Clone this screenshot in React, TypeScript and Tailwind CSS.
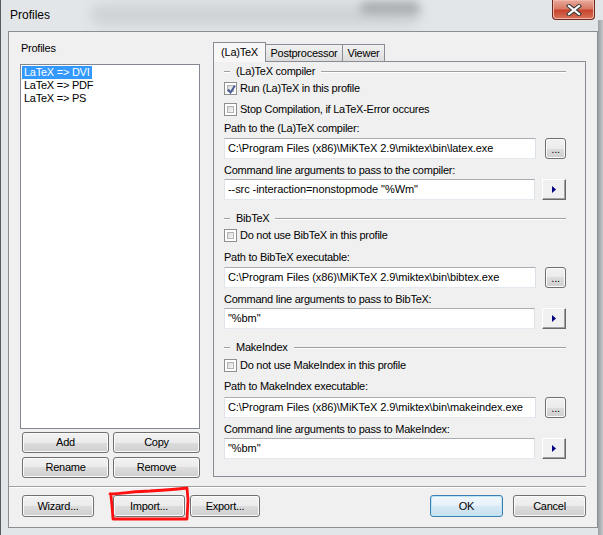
import React from "react";

// Win7 "Profiles" dialog

const font = "font-['Tahoma','Liberation_Sans',sans-serif] tracking-[-0.25px]";

function Win7Button({
  label,
  className = "",
  isDefault = false,
}: {
  label: string;
  className?: string;
  isDefault?: boolean;
}) {
  return (
    <div
      className={`flex items-center justify-center rounded-[3px] border text-[11px] leading-none text-black ${
        isDefault
          ? "border-[#3c7fb1] bg-[linear-gradient(#f0f7fc_0%,#e6f1f9_50%,#d6e8f4_50%,#c9e0f0_100%)] shadow-[inset_0_0_0_1px_#bde4f7]"
          : "border-[#707070] bg-[linear-gradient(#f2f2f2_0%,#ebebeb_50%,#dddddd_50%,#cfcfcf_100%)] shadow-[inset_0_0_0_1px_#fbfbfb]"
      } ${className}`}
    >
      {label}
    </div>
  );
}

function Checkbox({ checked = false, label }: { checked?: boolean; label: string }) {
  return (
    <div className="flex h-[13px] items-center">
      <div className="relative h-[13px] w-[13px] border border-[#8e8f8f] bg-white p-[2px]">
        <div className="h-full w-full border border-[#b4b4b4] bg-[linear-gradient(135deg,#d8d8d8,#f8f8f8)]" />
        {checked && (
          <svg className="absolute left-[1px] top-[1px]" width="11" height="11" viewBox="0 0 11 11">
            <path d="M2 5.5 L4.5 8.5 L9 1.5" fill="none" stroke="#4a5f97" strokeWidth="2" />
          </svg>
        )}
      </div>
      <span className="ml-[3px] text-[11px] leading-[13px]">{label}</span>
    </div>
  );
}

function GroupHeader({ label }: { label: string }) {
  return (
    <div className="flex h-[13px] items-center">
      <div className="w-[6px] border-t border-b border-t-[#a0a0a0] border-b-white" />
      <span className="ml-[6px] text-[11px] leading-[13px]">{label}</span>
      <div className="ml-[6px] flex-1 border-t border-b border-t-[#a0a0a0] border-b-white" />
    </div>
  );
}

function Label({ text, className = "" }: { text: string; className?: string }) {
  return <div className={`h-[13px] text-[11px] leading-[13px] ${className}`}>{text}</div>;
}

function Field({ value, className = "", button }: { value: string; className?: string; button: "browse" | "arrow" }) {
  return (
    <div className={`flex h-[21px] items-center ${className}`}>
      <div className="flex h-[21px] w-[314px] items-center border border-t-[#abadb3] border-l-[#e2e3ea] border-r-[#dbdfe6] border-b-[#e3e9ef] bg-white pl-[3px] text-[11px] tracking-[-0.08px]">
        {value}
      </div>
      {button === "browse" ? (
        <Win7Button label="..." className="ml-[9px] h-[21px] w-[21px] items-end pb-[3px]" />
      ) : (
        <div className="ml-[7px] flex h-[21px] w-[24px] items-center justify-center border border-t-white border-l-white border-r-[#696969] border-b-[#696969] bg-[#f0f0f0] shadow-[inset_-1px_-1px_0_#a0a0a0]">
          <svg width="4" height="7" viewBox="0 0 4 7">
            <path d="M0 0 L4 3.5 L0 7 Z" fill="#000080" />
          </svg>
        </div>
      )}
    </div>
  );
}

export default function App() {
  return (
    <div className={`relative h-[535px] w-[603px] overflow-hidden bg-[#e3e6e9] text-black ${font}`}>
      {/* blurred glass behind title */}
      <div className="absolute left-[90px] top-[4px] h-[22px] w-[330px] rounded-full bg-[#d0d3d6] blur-[6px]" />
      <div className="absolute left-[360px] top-[2px] h-[12px] w-[60px] rounded-full bg-[#a8acb0] blur-[5px]" />
      <div className="absolute left-[0px] top-[0px] h-[535px] w-[1px] bg-[#5a5a5a]" />
      <div className="absolute right-0 top-[20px] h-[515px] w-[5px] bg-[linear-gradient(90deg,#9a9ea2,#c4c7ca)]" />

      {/* title bar */}
      <div className="relative flex h-[31px] items-start">
        <span className="ml-[10px] mt-[8px] font-['Liberation_Sans',sans-serif] text-[12px] leading-[15px] tracking-normal">
          Profiles
        </span>
        <div className="ml-auto mr-[8px] flex h-[20px] w-[43px] items-center justify-center rounded-b-[4px] border border-t-0 border-[#6e2a20] bg-[linear-gradient(#e9a99b_0%,#d87a66_45%,#c8442d_55%,#d9735a_100%)] shadow-[inset_0_0_0_1px_#f1b7aa]">
          <svg width="16" height="12" viewBox="0 0 16 12">
            <path d="M3 2 L13 10 M13 2 L3 10" stroke="#3a3a3a" strokeWidth="4.2" strokeLinecap="square" />
            <path d="M3 2 L13 10 M13 2 L3 10" stroke="#ffffff" strokeWidth="2.2" strokeLinecap="square" />
          </svg>
        </div>
      </div>

      {/* client area */}
      <div className="relative ml-[8px] h-[497px] w-[590px] border border-[#8b8f94] bg-[#f0f0f0]">
        <div className="flex">
          {/* left column */}
          <div className="ml-[11px] mt-[10px] w-[180px]">
            <Label text="Profiles" className="ml-[1px]" />
            <div className="mt-[9px] h-[365px] w-[180px] border border-[#828790] bg-white pl-[1px] pt-[1px]">
              <div className="h-[13px] w-fit bg-[#3399ff] px-[2px] text-[11px] leading-[13px] text-white">
                LaTeX =&gt; DVI
              </div>
              <div className="h-[13px] px-[2px] text-[11px] leading-[13px]">LaTeX =&gt; PDF</div>
              <div className="h-[13px] px-[2px] text-[11px] leading-[13px]">LaTeX =&gt; PS</div>
            </div>
            <div className="mt-[3px] flex gap-[4px] pl-[2px]">
              <Win7Button label="Add" className="h-[21px] w-[87px]" />
              <Win7Button label="Copy" className="h-[21px] w-[87px]" />
            </div>
            <div className="mt-[4px] flex gap-[4px] pl-[2px]">
              <Win7Button label="Rename" className="h-[21px] w-[87px]" />
              <Win7Button label="Remove" className="h-[21px] w-[87px]" />
            </div>
          </div>

          {/* right column: tabs */}
          <div className="ml-[13px] mt-[10px] w-[373px]">
            <div className="relative z-10 flex h-[20px] items-end">
              <div className="flex h-[20px] w-[53px] items-start justify-center border border-b-0 border-[#898c95] bg-[#f7f7f7] pt-[3px] text-[11px] leading-[13px]">
                (La)TeX
              </div>
              <div className="mb-[1px] flex h-[17px] w-[77px] items-center justify-center border border-b-0 border-l-0 border-[#898c95] bg-[linear-gradient(#f2f2f2,#dcdcdc)] text-[11px]">
                Postprocessor
              </div>
              <div className="mb-[1px] flex h-[17px] w-[42px] items-center justify-center border border-b-0 border-l-0 border-[#898c95] bg-[linear-gradient(#f2f2f2,#dcdcdc)] text-[11px]">
                Viewer
              </div>
            </div>
            <div className="-mt-[1px] h-[416px] border border-[#898c95] bg-[#f0f0f0] pl-[10px] pr-[19px] pt-[3px]">
              <GroupHeader label="(La)TeX compiler" />
              <div className="mt-[4px]">
                <Checkbox checked label="Run (La)TeX in this profile" />
              </div>
              <div className="mt-[8px]">
                <Checkbox label="Stop Compilation, if LaTeX-Error occures" />
              </div>
              <Label text="Path to the (La)TeX compiler:" className="mt-[6px]" />
              <Field className="mt-[3px]" value="C:\Program Files (x86)\MiKTeX 2.9\miktex\bin\latex.exe" button="browse" />
              <Label text="Command line arguments to pass to the compiler:" className="mt-[5px]" />
              <Field className="mt-[2px]" value={'--src -interaction=nonstopmode "%Wm"'} button="arrow" />

              <div className="mt-[12px]">
                <GroupHeader label="BibTeX" />
              </div>
              <div className="mt-[4px]">
                <Checkbox label="Do not use BibTeX in this profile" />
              </div>
              <Label text="Path to BibTeX executable:" className="mt-[9px]" />
              <Field className="mt-[3px]" value="C:\Program Files (x86)\MiKTeX 2.9\miktex\bin\bibtex.exe" button="browse" />
              <Label text="Command line arguments to pass to BibTeX:" className="mt-[5px]" />
              <Field className="mt-[2px]" value={'"%bm"'} button="arrow" />

              <div className="mt-[12px]">
                <GroupHeader label="MakeIndex" />
              </div>
              <div className="mt-[5px]">
                <Checkbox label="Do not use MakeIndex in this profile" />
              </div>
              <Label text="Path to MakeIndex executable:" className="mt-[8px]" />
              <Field className="mt-[4px]" value="C:\Program Files (x86)\MiKTeX 2.9\miktex\bin\makeindex.exe" button="browse" />
              <Label text="Command line arguments to pass to MakeIndex:" className="mt-[5px]" />
              <Field className="mt-[2px]" value={'"%bm"'} button="arrow" />
            </div>
          </div>
        </div>

        {/* separator */}
        <div className="mt-[8px] w-[577px] border-t border-b border-t-[#a0a0a0] border-b-white" />

        {/* bottom buttons */}
        <div className="mt-[7px] flex">
          <Win7Button label="Wizard..." className="ml-[13px] h-[22px] w-[72px]" />
          <Win7Button label="Import..." className="ml-[19px] h-[22px] w-[72px]" />
          <Win7Button label="Export..." className="ml-[5px] h-[22px] w-[70px]" />
          <Win7Button label="OK" isDefault className="ml-[170px] h-[22px] w-[73px]" />
          <Win7Button label="Cancel" className="ml-[10px] h-[22px] w-[73px]" />
        </div>
      </div>

      {/* red hand-drawn mark around Import */}
      <svg className="absolute left-0 top-0" width="603" height="535" viewBox="0 0 603 535">
        <path
          d="M110 494 C125 493 140 491 150 491 C165 490 178 489 187 488 L188 500 L187 519 L150 519 L113 519 L112 506 L111 496"
          fill="none"
          stroke="#ff1010"
          strokeWidth="2.8"
          strokeLinejoin="round"
          strokeLinecap="round"
        />
      </svg>
    </div>
  );
}
